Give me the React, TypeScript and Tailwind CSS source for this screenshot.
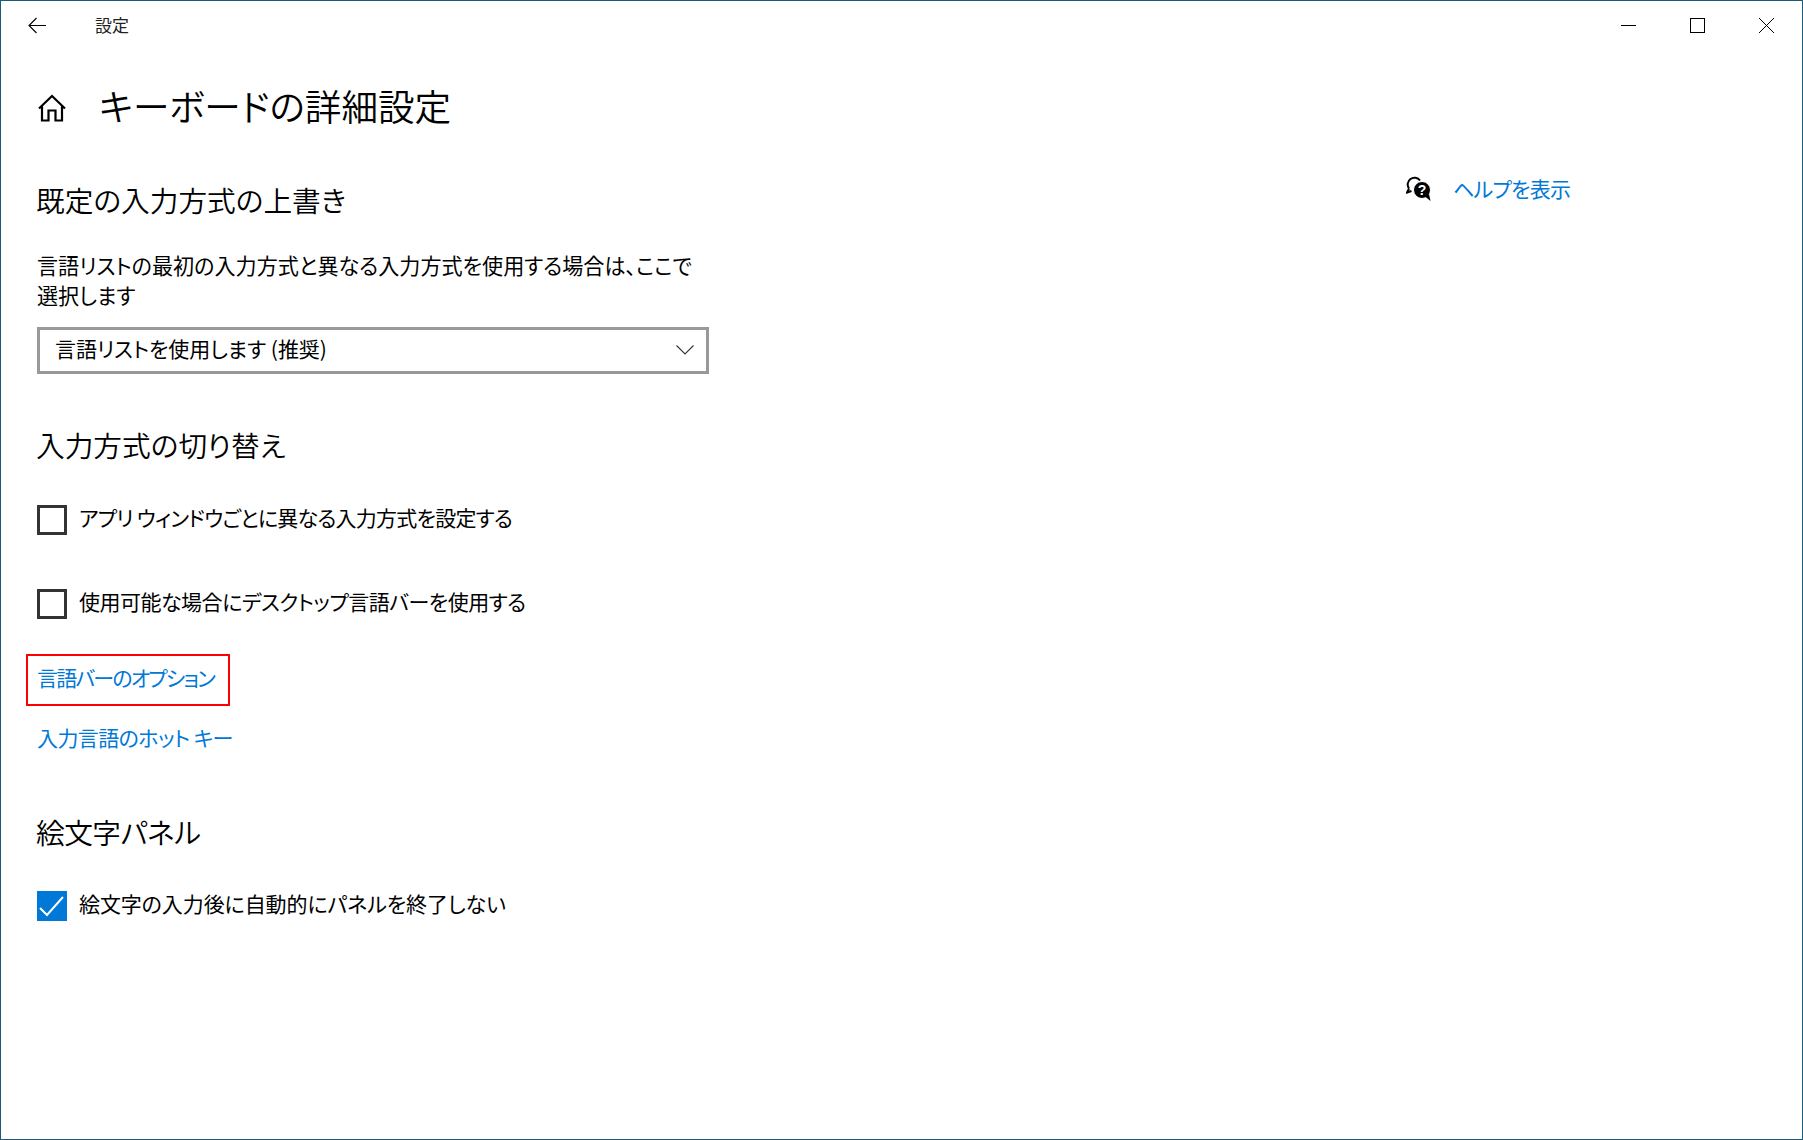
const font = "[font-family:'Noto_Sans_CJK_JP',sans-serif] [font-feature-settings:'palt']";

function Heading({ children, className = "" }: { children: string; className?: string }) {
  return <h2 className={`-ml-px h-10 text-[28.7px] leading-10 font-[350] text-black ${className}`}>{children}</h2>;
}

function CheckRow({
  label,
  checked = false,
  className = "",
  textClass = "",
}: {
  label: string;
  checked?: boolean;
  className?: string;
  textClass?: string;
}) {
  return (
    <label className={`flex h-[30px] items-center gap-[12px] ${className}`}>
      {checked ? (
        <span className="flex size-[30px] items-center justify-center bg-[#0078d7]">
          <svg width="30" height="30" viewBox="0 0 30 30">
            <path d="M3 17l7 7L26 6" fill="none" stroke="#fff" strokeWidth="2" />
          </svg>
        </span>
      ) : (
        <span className="size-[30px] border-[3px] border-[#333333]" />
      )}
      <span className={`pb-[6px] text-[21px] leading-[26px] text-black ${textClass}`}>{label}</span>
    </label>
  );
}

function HelpIcon() {
  return (
    <svg width="26" height="26" viewBox="0 0 26 26" className="shrink-0">
      <path d="M3 12.5A6.8 6.8 0 1 1 14 4.5M3 12.5L1 16.5l4.5-1.5" fill="none" stroke="#000" strokeWidth="2" />
      <circle cx="16" cy="14" r="8.5" fill="#000" stroke="#fff" strokeWidth="1" />
      <path d="M19 20.5l5.5 4.5-1.5-7z" fill="#000" />
      <text x="16" y="19" textAnchor="middle" fontSize="14" fontWeight="700" fill="#fff" fontFamily="Liberation Sans">?</text>
    </svg>
  );
}

export default function App() {
  return (
    <div className={`h-[1140px] w-full overflow-hidden border border-[#1b5a78] bg-white ${font}`}>
      {/* title bar */}
      <header className="flex h-[49px] items-center">
        <svg width="18" height="17" viewBox="0 0 18 17" className="ml-[27px]">
          <path d="M18 8.5H1M8.5 1L1 8.5 8.5 16" fill="none" stroke="#000" strokeWidth="1.1" />
        </svg>
        <span className="ml-[49px] pb-[2px] text-[17px] text-[#222222]">設定</span>
        <div className="ml-auto mr-[28px] flex items-center gap-[54px]">
          <span className="h-px w-[15px] bg-black" />
          <span className="size-[15px] border border-black" />
          <svg width="15" height="15" viewBox="0 0 15 15">
            <path d="M0 0l15 15M15 0L0 15" stroke="#000" strokeWidth="1" />
          </svg>
        </div>
      </header>

      <div className="flex">
        <main className="w-[1369px] pl-[36px]">
          <div className="mt-[27px] flex h-[60px] items-center">
            <svg width="30" height="28" viewBox="0 0 30 28" className="mt-[2px]">
              <path
                d="M2 14.5L15 2l13 12.5M5 11.5V26.5h6.5v-10h7v10H25V11.5"
                fill="none"
                stroke="#000"
                strokeWidth="2.2"
              />
            </svg>
            <h1 className="ml-[32px] pb-[2px] text-[36.6px] leading-[60px] font-[350] text-black">キーボードの詳細設定</h1>
          </div>

          <Heading className="mt-[43px] pb-[2px]">既定の入力方式の上書き</Heading>
          <p className="mt-[30px] w-[660px] text-[21.1px] leading-[30px] text-black">
            言語リストの最初の入力方式と異なる入力方式を使用する場合は、ここで選択します
          </p>
          <div className="mt-[17px] flex h-[47px] w-[672px] items-center justify-between border-[3px] border-[#999999] pl-[15px] pr-[12px]">
            <span className="pb-[3px] text-[21px] tracking-[-0.05px] text-black">言語リストを使用します (推奨)</span>
            <svg width="18" height="10" viewBox="0 0 18 10" className="mb-[2px]">
              <path d="M.5.5L9 9l8.5-8.5" fill="none" stroke="#333333" strokeWidth="1.1" />
            </svg>
          </div>

          <Heading className="mt-[51px]">入力方式の切り替え</Heading>
          <CheckRow className="mt-[40px]" textClass="tracking-[-0.75px]" label="アプリ ウィンドウごとに異なる入力方式を設定する" />
          <CheckRow className="mt-[54px]" textClass="tracking-[-0.5px]" label="使用可能な場合にデスクトップ言語バーを使用する" />

          <div className="relative mt-[46px] h-[30px] text-[21px] leading-[24px] tracking-[-1.8px] text-[#0078d7]">
            言語バーのオプション
            <span className="absolute -left-[11px] -top-[11px] h-[52px] w-[204px] border-2 border-[#ff0000]" />
          </div>
          <div className="mt-[29px] h-[30px] text-[21px] leading-[26px] tracking-[-0.6px] text-[#0078d7]">入力言語のホット キー</div>

          <Heading className="mt-[58px] tracking-[-0.5px]">絵文字パネル</Heading>
          <CheckRow className="mt-[39px]" textClass="tracking-[-0.1px]" checked label="絵文字の入力後に自動的にパネルを終了しない" />
        </main>

        <aside className="mt-[125px] flex h-[28px] items-center gap-[21px] pl-[36px]">
          <HelpIcon />
          <span className="text-[21px] tracking-[-0.75px] text-[#0078d7]">ヘルプを表示</span>
        </aside>
      </div>
    </div>
  );
}
